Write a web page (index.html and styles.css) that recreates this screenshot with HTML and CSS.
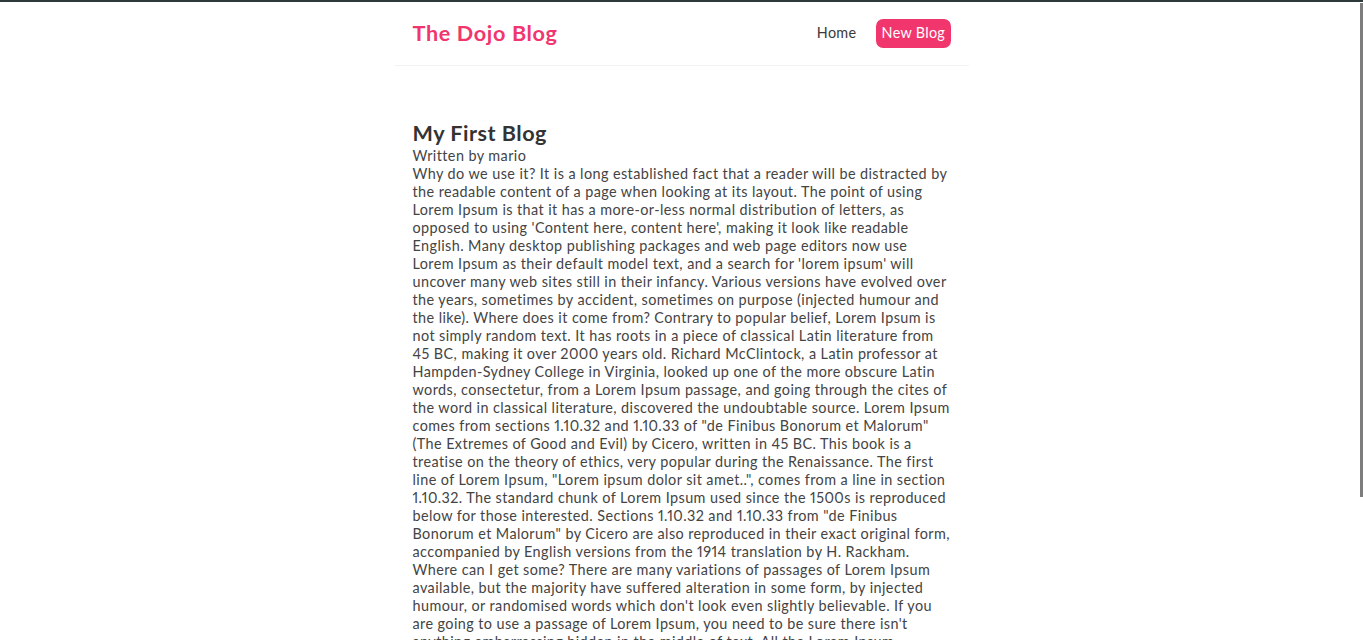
FILE: index.html
```html
<!DOCTYPE html>
<html lang="en">
<head>
<meta charset="utf-8">
<title>The Dojo Blog</title>
<link rel="stylesheet" href="styles.css">
</head>
<body>
<div class="topline"></div>
<div class="scroll-thumb"></div>
<div class="app">
  <nav class="navbar">
    <h1 class="brand">The Dojo Blog</h1>
    <div class="links">
      <a href="#" class="link">Home</a>
      <a href="#" class="link link-cta">New Blog</a>
    </div>
  </nav>
  <main class="content">
    <article class="blog-details">
      <h2 class="blog-title">My First Blog</h2>
      <p class="blog-author">Written by mario</p>
      <div class="blog-body">Why do we use it? It is a long established fact that a reader will be distracted by the readable content of a page when looking at its layout. The point of using Lorem Ipsum is that it has a more-or-less normal distribution of letters, as opposed to using 'Content here, content here', making it look like readable English. Many desktop publishing packages and web page editors now use Lorem Ipsum as their default model text, and a search for 'lorem ipsum' will uncover many web sites still in their infancy. Various versions have evolved over the years, sometimes by accident, sometimes on purpose (injected humour and the like). Where does it come from? Contrary to popular belief, Lorem Ipsum is not simply random text. It has roots in a piece of classical Latin literature from 45 BC, making it over 2000 years old. Richard McClintock, a Latin professor at Hampden-Sydney College in Virginia, looked up one of the more obscure Latin words, consectetur, from a Lorem Ipsum passage, and going through the cites of the word in classical literature, discovered the undoubtable source. Lorem Ipsum comes from sections 1.10.32 and 1.10.33 of "de Finibus Bonorum et Malorum" (The Extremes of Good and Evil) by Cicero, written in 45 BC. This book is a treatise on the theory of ethics, very popular during the Renaissance. The first line of Lorem Ipsum, "Lorem ipsum dolor sit amet..", comes from a line in section 1.10.32. The standard chunk of Lorem Ipsum used since the 1500s is reproduced below for those interested. Sections 1.10.32 and 1.10.33 from "de Finibus Bonorum et Malorum" by Cicero are also reproduced in their exact original form, accompanied by English versions from the 1914 translation by H. Rackham. Where can I get some? There are many variations of passages of Lorem Ipsum available, but the majority have suffered alteration in some form, by injected humour, or randomised words which don't look even slightly believable. If you are going to use a passage of Lorem Ipsum, you need to be sure there isn't anything embarrassing hidden in the middle of text. All the Lorem Ipsum generators on the Internet tend to repeat predefined chunks as necessary, making this the first true generator on the Internet. It uses a dictionary of over 200 Latin words, combined with a handful of model sentence structures, to generate Lorem Ipsum which looks reasonable. The generated Lorem Ipsum is therefore always free from repetition, injected humour, or non-characteristic words etc.</div>
    </article>
  </main>
</div>
</body>
</html>
```

FILE: styles.css
```css
html {
  scrollbar-width: none;
}
html::-webkit-scrollbar {
  display: none;
}
* {
  margin: 0;
  padding: 0;
  box-sizing: content-box;
  font-family: "Lato", "Liberation Sans", sans-serif;
  color: #333;
}
body {
  background: #fff;
}
.topline {
  position: fixed;
  top: 0;
  left: 0;
  right: 0;
  height: 2px;
  background: #2f3838;
  z-index: 10;
}
.scroll-thumb {
  position: fixed;
  top: 3px;
  right: 0;
  width: 3px;
  height: 494px;
  background: #7d7d7d;
  z-index: 10;
}
.navbar {
  display: flex;
  align-items: center;
  max-width: 538px;
  margin: 0 auto;
  padding: 19px 18px 17px;
  border-bottom: 1px solid #f2f2f2;
}
.brand {
  font-size: 21.6px;
  line-height: 27px;
  font-weight: 700;
  letter-spacing: 0.65px;
  color: #f1356d;
}
.links {
  margin-left: auto;
  display: flex;
}
.link {
  margin-left: 14.4px;
  padding: 5.4px;
  font-size: 14.4px;
  line-height: 18px;
  letter-spacing: 0.3px;
  text-decoration: none;
  color: #3a3a3a;
}
.link-cta {
  background: #f1356d;
  color: #fff;
  border-radius: 7.2px;
}
.content {
  max-width: 538px;
  margin: 36px auto;
  padding: 18px;
}
.blog-details {
  margin-right: -2px;
}
.blog-title {
  font-size: 21.6px;
  line-height: 27px;
  font-weight: 700;
  letter-spacing: 0.5px;
  color: #333;
}
.blog-author,
.blog-body {
  font-size: 14.4px;
  line-height: 18px;
  letter-spacing: 0.42px;
  font-variant-numeric: proportional-nums;
  color: #444;
}
```
